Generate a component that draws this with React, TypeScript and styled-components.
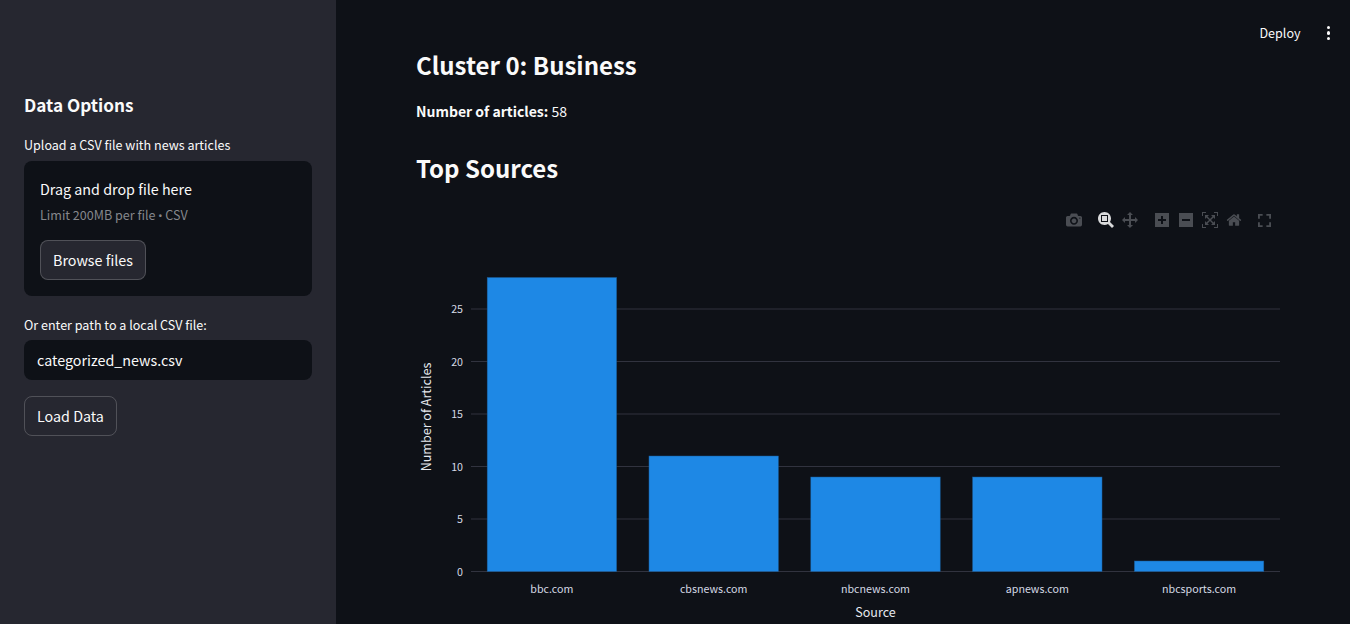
import styled, { createGlobalStyle } from 'styled-components';

const GlobalStyle = createGlobalStyle`
  html, body {
    margin: 0;
    padding: 0;
    height: 100%;
    overflow: hidden;
    background: #0e1117;
  }
  body {
    font-family: "Noto Sans CJK SC", "Noto Sans", sans-serif;
    color: #fafafa;
  }
  * {
    box-sizing: border-box;
  }
`;

const sources = [
  { name: 'bbc.com', count: 28 },
  { name: 'cbsnews.com', count: 11 },
  { name: 'nbcnews.com', count: 9 },
  { name: 'apnews.com', count: 9 },
  { name: 'nbcsports.com', count: 1 },
];

const ticks = [0, 5, 10, 15, 20, 25];

// chart geometry, in svg coordinates (svg starts at x=416, y=195 of the page)
const plotLeft = 55;
const plotWidth = 809;
const baseY = 376.5;
const unit = 10.5;
const band = plotWidth / sources.length;
const barWidth = band * 0.8;

const modeIcons = [
  {
    key: 'camera',
    left: 0,
    view: '0 0 1000 1000',
    d: 'm500 450c-83 0-150-67-150-150 0-83 67-150 150-150 83 0 150 67 150 150 0 83-67 150-150 150z m400 150h-120c-16 0-34 13-39 29l-31 93c-6 15-23 28-40 28h-340c-16 0-34-13-39-28l-31-94c-6-15-23-28-40-28h-120c-55 0-100-45-100-100v-450c0-55 45-100 100-100h800c55 0 100 45 100 100v450c0 55-45 100-100 100z m-400-550c-138 0-250 112-250 250 0 138 112 250 250 250 138 0 250-112 250-250 0-138-112-250-250-250z m365 380c-19 0-35 16-35 35 0 19 16 35 35 35 19 0 35-16 35-35 0-19-16-35-35-35z',
  },
  {
    key: 'zoom',
    left: 16,
    active: true,
    view: '0 0 1000 1000',
    d: 'm1000-25l-250 251c40 63 63 138 63 218 0 224-182 406-407 406-224 0-406-182-406-406s183-406 407-406c80 0 155 22 218 62l250-250 125 125z m-812 250l0 438 437 0 0-438-437 0z m62 375l313 0 0-312-313 0 0 312z',
  },
  {
    key: 'pan',
    left: 8,
    view: '0 0 1000 1000',
    d: 'm1000 350l-187 188 0-125-250 0 0 250 125 0-188 187-187-187 125 0 0-250-250 0 0 125-188-188 186-187 0 125 252 0 0-250-125 0 187-188 188 188-125 0 0 250 250 0 0-126 187 188z',
  },
  {
    key: 'plus',
    left: 16,
    view: '0 0 875 1000',
    d: 'm1 787l0-875 875 0 0 875-875 0z m687-500l-187 0 0-187-125 0 0 187-188 0 0 125 188 0 0 187 125 0 0-187 187 0 0-125z',
  },
  {
    key: 'minus',
    left: 8,
    view: '0 0 875 1000',
    d: 'm0 788l0-876 875 0 0 876-875 0z m688-500l-500 0 0 125 500 0 0-125z',
  },
  {
    key: 'autoscale',
    left: 8,
    view: '0 0 1000 1000',
    d: 'm250 850l-187 0-63 0 0-62 0-188 63 0 0 188 187 0 0 62z m688 0l-188 0 0-62 188 0 0-188 62 0 0 188 0 62-62 0z m-875-938l0 188-63 0 0-188 0-62 63 0 187 0 0 62-187 0z m875 188l0-188-188 0 0-62 188 0 62 0 0 62 0 188-62 0z m-125 188l-1 0-93-94-156 156 156 156 92-93 2 0 0 250-250 0 0-2 93-92-156-156-156 156 94 92 0 2-250 0 0-250 0 0 93 93 157-156-157-156-93 94 0 0 0-250 250 0 0 0-94 93 156 157 156-157-93-93 0 0 250 0 0 250z',
  },
  {
    key: 'home',
    left: 8,
    view: '0 0 928.6 1000',
    d: 'm786 296v-267q0-15-11-26t-25-10h-214v214h-143v-214h-214q-15 0-25 10t-11 26v267q0 1 0 2t0 2l321 264 321-264q1-1 1-4z m124 39l-34-41q-5-5-12-6h-2q-7 0-12 3l-386 322-386-322q-7-4-13-4-7 2-12 7l-35 41q-4 5-3 13t6 12l401 334q18 15 42 15t43-15l136-114v109q0 8 5 13t13 5h107q8 0 13-5t5-13v-227l122-102q5-5 6-12t-4-13z',
  },
];

function ModeIcon({ view, d, active }: { view: string; d: string; active?: boolean }) {
  return (
    <svg width="16" height="16" viewBox={view}>
      <path d={d} transform="matrix(1 0 0 -1 0 850)" fill={active ? '#d9dadb' : '#4a4d53'} />
    </svg>
  );
}

export default function App() {
  return (
    <>
      <GlobalStyle />
      <AppShell>
        <Sidebar>
          <SidebarTitle>Data Options</SidebarTitle>
          <FieldLabel>Upload a CSV file with news articles</FieldLabel>
          <Dropzone>
            <DropTitle>Drag and drop file here</DropTitle>
            <DropHint>
              Limit 200MB per file <Bullet>•</Bullet> CSV
            </DropHint>
            <Button $filled>Browse files</Button>
          </Dropzone>
          <FieldLabel $top={19} $bottom={5}>
            Or enter path to a local CSV file:
          </FieldLabel>
          <PathInput readOnly value="categorized_news.csv" />
          <Button>Load Data</Button>
        </Sidebar>

        <Main>
          <TopBar>
            <DeployLabel>Deploy</DeployLabel>
            <MenuDots>
              <span />
              <span />
              <span />
            </MenuDots>
          </TopBar>
          <Content>
            <Heading>Cluster 0: Business</Heading>
            <Stat>
              <strong>Number of articles:</strong> 58
            </Stat>
            <Heading $top={25}>Top Sources</Heading>
            <ChartWrap>
              <ModeBar>
                {modeIcons.map((icon) => (
                  <ModeButton key={icon.key} $left={icon.left}>
                    <ModeIcon view={icon.view} d={icon.d} active={icon.active} />
                  </ModeButton>
                ))}
                <ModeButton $left={16}>
                  <svg width="13" height="13" viewBox="0 0 14 14" fill="none" stroke="#4a4d53" strokeWidth="2">
                    <path d="M1 5V1h4M9 1h4v4M13 9v4H9M5 13H1V9" />
                  </svg>
                </ModeButton>
              </ModeBar>
              <ChartSvg width="864" height="429" viewBox="0 0 864 429">
                {ticks.map((t) => (
                  <g key={t}>
                    <line
                      x1={plotLeft}
                      x2={plotLeft + plotWidth}
                      y1={baseY - t * unit}
                      y2={baseY - t * unit}
                      stroke="#31333f"
                      strokeWidth="1"
                    />
                    <TickText x={plotLeft - 8} y={baseY - t * unit + 4} textAnchor="end">
                      {t}
                    </TickText>
                  </g>
                ))}
                {sources.map((s, i) => (
                  <g key={s.name}>
                    <rect
                      x={plotLeft + band * i + (band - barWidth) / 2}
                      y={baseY - s.count * unit}
                      width={barWidth}
                      height={s.count * unit}
                      fill="#1e88e5"
                      stroke="#1b5a94"
                      strokeWidth="0.5"
                    />
                    <TickText x={plotLeft + band * i + band / 2} y={397.5} textAnchor="middle">
                      {s.name}
                    </TickText>
                  </g>
                ))}
                <AxisText x={459.5} y={422} textAnchor="middle">
                  Source
                </AxisText>
                <AxisText x={15} y={222} textAnchor="middle" transform="rotate(-90 15 222)">
                  Number of Articles
                </AxisText>
              </ChartSvg>
            </ChartWrap>
          </Content>
        </Main>
      </AppShell>
    </>
  );
}

const AppShell = styled.div`
  display: flex;
  width: 100%;
  height: 100vh;
  overflow: hidden;
`;

const Sidebar = styled.aside`
  flex: 0 0 336px;
  display: flex;
  flex-direction: column;
  align-items: flex-start;
  padding: 91px 24px 0;
  background: #262730;
`;

const SidebarTitle = styled.h2`
  margin: 0 0 16px;
  font-size: 17.2px;
  line-height: 28px;
  font-weight: 600;
`;

const FieldLabel = styled.label<{ $top?: number; $bottom?: number }>`
  margin-top: ${(props) => props.$top ?? 0}px;
  margin-bottom: ${(props) => props.$bottom ?? 6}px;
  font-size: 12.55px;
  line-height: 20px;
`;

const Dropzone = styled.div`
  width: 100%;
  height: 135px;
  padding: 16px;
  background: #0e1117;
  border-radius: 8px;
`;

const DropTitle = styled.div`
  margin-bottom: 2px;
  font-size: 14.3px;
  line-height: 24px;
`;

const DropHint = styled.div`
  margin-bottom: 12px;
  font-size: 12.55px;
  line-height: 24px;
  color: #85878c;
`;

const Bullet = styled.span`
  font-family: "Noto Sans", sans-serif;
  font-size: 11px;
`;

const Button = styled.button<{ $filled?: boolean }>`
  display: block;
  height: 40px;
  padding: 0 12px 2px;
  font-family: inherit;
  font-size: 14.3px;
  color: #fafafa;
  background: ${(props) => (props.$filled ? '#262730' : 'transparent')};
  border: 1px solid rgba(250, 250, 250, 0.2);
  border-radius: 8px;
`;

const PathInput = styled.input`
  width: 100%;
  height: 40px;
  margin-bottom: 16px;
  padding: 0 13px 2px;
  font-family: inherit;
  font-size: 14.3px;
  color: #fafafa;
  background: #0e1117;
  border: none;
  border-radius: 8px;
  outline: none;
`;

const Main = styled.main`
  position: relative;
  flex: 1;
  min-width: 0;
`;

const TopBar = styled.header`
  position: absolute;
  top: 0;
  right: 0;
  display: flex;
  align-items: center;
  gap: 26px;
  height: 66px;
  padding-right: 20px;
`;

const DeployLabel = styled.span`
  font-size: 12.55px;
  line-height: 20px;
`;

const MenuDots = styled.div`
  display: flex;
  flex-direction: column;
  gap: 2px;

  span {
    width: 3.5px;
    height: 3.5px;
    border-radius: 50%;
    background: #fafafa;
  }
`;

const Content = styled.div`
  padding: 45px 70px 0 80px;
`;

const Heading = styled.h2<{ $top?: number }>`
  margin: ${(props) => props.$top ?? 0}px 0 0;
  font-size: 24px;
  line-height: 40px;
  font-weight: 600;
`;

const Stat = styled.p`
  margin: 14px 0 0;
  font-size: 14px;
  line-height: 24px;

  strong {
    font-weight: 600;
  }
`;

const ChartWrap = styled.div`
  position: relative;
  margin-top: 7px;
  height: 429px;
`;

const ChartSvg = styled.svg`
  display: block;
`;

const ModeBar = styled.div`
  position: absolute;
  top: 17px;
  left: 650px;
  display: flex;
  align-items: center;
`;

const ModeButton = styled.div<{ $left: number }>`
  display: flex;
  margin-left: ${(props) => props.$left}px;
`;

const TickText = styled.text`
  font-size: 10.7px;
  fill: #d5dae5;
`;

const AxisText = styled.text`
  font-size: 12.55px;
  fill: #e6e9ef;
`;
